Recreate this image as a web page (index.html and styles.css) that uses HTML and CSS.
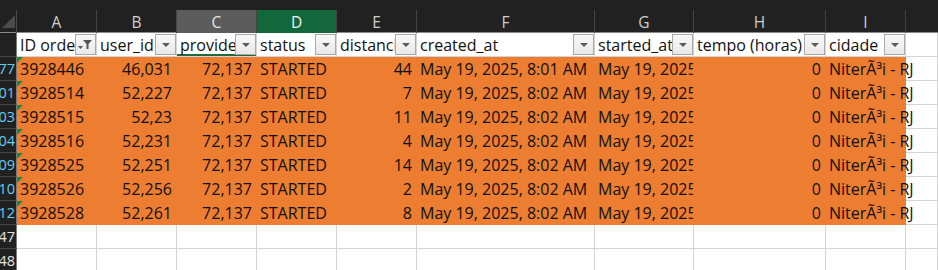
FILE: index.html
```html
<!DOCTYPE html>
<html lang="pt">
<head>
<meta charset="utf-8">
<title>Planilha</title>
<link rel="stylesheet" href="styles.css">
</head>
<body>
<div class="sheet">
  <div class="topbar"></div>
  <div class="row colhdr">
    <div class="corner"><svg width="16" height="22" viewBox="0 0 16 22"><polygon points="15,5 15,18 2,18" fill="#4b4b4b"/></svg></div>
    <div class="ch">A</div>
    <div class="ch">B</div>
    <div class="ch ch-sel">C</div>
    <div class="ch ch-act">D</div>
    <div class="ch">E</div>
    <div class="ch">F</div>
    <div class="ch">G</div>
    <div class="ch">H</div>
    <div class="ch">I</div>
    <div class="ch ch-last"></div>
  </div>

  <div class="row hdr">
    <div class="rh rh-plain"><span>1</span></div>
    <div class="c fc"><span class="t">ID order</span><span class="fb"><svg width="19" height="19" viewBox="0 0 19 19"><polygon points="2,11 7,11 4.5,14" fill="#555"/><polygon points="7,5 16,5 12.5,9 12.5,14 10.5,14 10.5,9" fill="#555"/></svg></span></div>
    <div class="c fc"><span class="t">user_id</span><span class="fb"><i class="dd"></i></span></div>
    <div class="c fc c-mark"><span class="t">provider_id</span><span class="fb"><i class="dd"></i></span></div>
    <div class="c fc"><span class="t">status</span><span class="fb"><i class="dd"></i></span></div>
    <div class="c fc"><span class="t">distancia</span><span class="fb"><i class="dd"></i></span></div>
    <div class="c fc"><span class="t">created_at</span><span class="fb"><i class="dd"></i></span></div>
    <div class="c fc"><span class="t">started_at</span><span class="fb"><i class="dd"></i></span></div>
    <div class="c fc"><span class="t">tempo (horas)</span><span class="fb"><i class="dd"></i></span></div>
    <div class="c fc"><span class="t">cidade</span><span class="fb"><i class="dd"></i></span></div>
    <div class="c"></div>
  </div>

  <div class="row data">
    <div class="rh"><span>1077</span></div>
    <div class="c o txt">3928446</div><div class="c o r">46,031</div><div class="c o r">72,137</div><div class="c o">STARTED</div><div class="c o r">44</div><div class="c o">May 19, 2025, 8:01 AM</div><div class="c o">May 19, 2025, 8:01 AM</div><div class="c o r">0</div><div class="c o ov">NiterÃ³i - RJ</div><div class="c"></div>
  </div>
  <div class="row data">
    <div class="rh"><span>1101</span></div>
    <div class="c o txt">3928514</div><div class="c o r">52,227</div><div class="c o r">72,137</div><div class="c o">STARTED</div><div class="c o r">7</div><div class="c o">May 19, 2025, 8:02 AM</div><div class="c o">May 19, 2025, 8:02 AM</div><div class="c o r">0</div><div class="c o ov">NiterÃ³i - RJ</div><div class="c"></div>
  </div>
  <div class="row data">
    <div class="rh"><span>1103</span></div>
    <div class="c o txt">3928515</div><div class="c o r">52,23</div><div class="c o r">72,137</div><div class="c o">STARTED</div><div class="c o r">11</div><div class="c o">May 19, 2025, 8:02 AM</div><div class="c o">May 19, 2025, 8:02 AM</div><div class="c o r">0</div><div class="c o ov">NiterÃ³i - RJ</div><div class="c"></div>
  </div>
  <div class="row data">
    <div class="rh"><span>1104</span></div>
    <div class="c o txt">3928516</div><div class="c o r">52,231</div><div class="c o r">72,137</div><div class="c o">STARTED</div><div class="c o r">4</div><div class="c o">May 19, 2025, 8:02 AM</div><div class="c o">May 19, 2025, 8:02 AM</div><div class="c o r">0</div><div class="c o ov">NiterÃ³i - RJ</div><div class="c"></div>
  </div>
  <div class="row data">
    <div class="rh"><span>1109</span></div>
    <div class="c o txt">3928525</div><div class="c o r">52,251</div><div class="c o r">72,137</div><div class="c o">STARTED</div><div class="c o r">14</div><div class="c o">May 19, 2025, 8:02 AM</div><div class="c o">May 19, 2025, 8:02 AM</div><div class="c o r">0</div><div class="c o ov">NiterÃ³i - RJ</div><div class="c"></div>
  </div>
  <div class="row data">
    <div class="rh"><span>1110</span></div>
    <div class="c o txt">3928526</div><div class="c o r">52,256</div><div class="c o r">72,137</div><div class="c o">STARTED</div><div class="c o r">2</div><div class="c o">May 19, 2025, 8:02 AM</div><div class="c o">May 19, 2025, 8:02 AM</div><div class="c o r">0</div><div class="c o ov">NiterÃ³i - RJ</div><div class="c"></div>
  </div>
  <div class="row data">
    <div class="rh"><span>1112</span></div>
    <div class="c o txt">3928528</div><div class="c o r">52,261</div><div class="c o r">72,137</div><div class="c o">STARTED</div><div class="c o r">8</div><div class="c o">May 19, 2025, 8:02 AM</div><div class="c o">May 19, 2025, 8:02 AM</div><div class="c o r">0</div><div class="c o ov">NiterÃ³i - RJ</div><div class="c"></div>
  </div>

  <div class="row empty">
    <div class="rh rh-plain"><span>1147</span></div>
    <div class="c"></div><div class="c"></div><div class="c"></div><div class="c"></div><div class="c"></div><div class="c"></div><div class="c"></div><div class="c"></div><div class="c"></div><div class="c"></div>
  </div>
  <div class="row empty">
    <div class="rh rh-plain"><span>1148</span></div>
    <div class="c"></div><div class="c"></div><div class="c"></div><div class="c"></div><div class="c"></div><div class="c"></div><div class="c"></div><div class="c"></div><div class="c"></div><div class="c"></div>
  </div>
</div>
</body>
</html>
```

FILE: styles.css
```css
* { box-sizing: border-box; }

html, body {
  margin: 0;
  padding: 0;
  background: #ffffff;
}

.sheet {
  width: 938px;
  height: 270px;
  overflow: hidden;
  font-family: "Open Sans", Lato, "Liberation Sans", sans-serif;
  font-size: 16px;
  color: #111;
}

.topbar {
  height: 10px;
  background: #212121;
}

.row {
  display: grid;
  grid-template-columns: 17px 80px 80px 80px 80px 80px 178px 99px 132px 80px 1fr;
}

/* column header */
.colhdr {
  height: 23px;
  background: #212121;
  border-bottom: 1px solid #8a8a8a;
}

.corner {
  border-right: 1px solid #4a4a4a;
  overflow: hidden;
}

.corner svg { display: block; }

.ch {
  border-right: 1px solid #444;
  color: #cfcfcf;
  font-size: 15.5px;
  display: flex;
  align-items: center;
  justify-content: center;
  padding-top: 1px;
}

.ch-sel {
  background: #5c5c5c;
  color: #e6e6e6;
}

.ch-act {
  background: #12683a;
  color: #f2f2f2;
}

.ch-last { border-right: none; }

/* row headers */
.rh {
  background: #212121;
  border-right: 1px solid #7a7a7a;
  border-bottom: 1px solid #474747;
  overflow: hidden;
  display: flex;
  align-items: flex-end;
  color: #66cdf3;
  font-size: 14.5px;
}

.rh span {
  display: block;
  flex: none;
  width: 36px;
  margin-left: -19.5px;
  text-align: center;
  padding-bottom: 1px;
  line-height: 21px;
}

.rh-plain { color: #e2e2e2; }

/* cells */
.c {
  position: relative;
  border-right: 1px solid #d4d4d4;
  border-bottom: 1px solid #d4d4d4;
  background: #fff;
  white-space: nowrap;
  overflow: hidden;
  padding: 0 4px 0 3px;
  line-height: 21px;
  display: flex;
  align-items: flex-end;
}

.hdr { height: 24px; }
.data { height: 24px; }
.empty { height: 24px; }

.fc {
  padding-right: 0;
  padding-bottom: 0;
  align-items: stretch;
}

.fc .t {
  flex: 1;
  min-width: 0;
  overflow: hidden;
  white-space: nowrap;
  align-self: flex-end;
}

.fb {
  flex: none;
  width: 21px;
  height: 21px;
  margin: 1px 0 1px 0;
  border: 1px solid #a9a9a9;
  background: linear-gradient(#f8f8f8, #e9e9e9);
  display: flex;
  align-items: center;
  justify-content: center;
}

.fb svg { display: block; }

.dd {
  display: block;
  width: 0;
  height: 0;
  border-left: 4px solid transparent;
  border-right: 4px solid transparent;
  border-top: 4px solid #5a5a5a;
  margin-top: 1px;
}

.c-mark {
  box-shadow: inset 0 -2px 0 #1d6b3c;
}

.o {
  background: #ed7d31;
  border-right-color: #ed7d31;
  border-bottom-color: #ed7d31;
  color: #101010;
}

.r { justify-content: flex-end; }

.ov {
  overflow: visible;
  z-index: 1;
}

.txt::before {
  content: "";
  position: absolute;
  top: 0;
  left: 0;
  border-top: 6px solid #1b8a3a;
  border-right: 6px solid transparent;
}
```
